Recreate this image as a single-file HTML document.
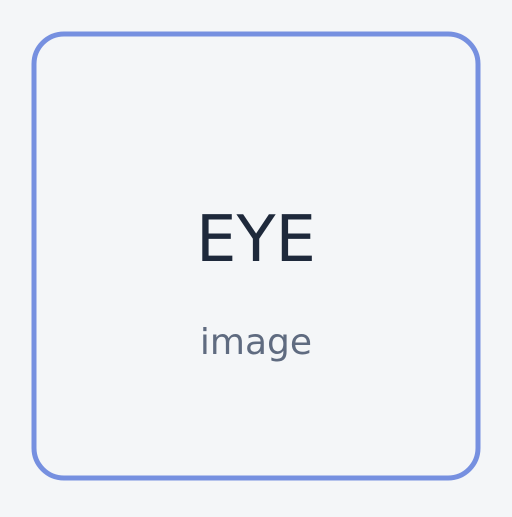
<!DOCTYPE html>
<html><head><style>html,body{margin:0;padding:0;background:#f4f6f8;}</style></head>
<body>
<svg width="512" height="512" xmlns="http://www.w3.org/2000/svg">
<rect width="512" height="512" fill="#f4f6f8"/>
<rect x="34" y="34" width="444" height="444" rx="30" ry="30" fill="#f4f6f8" stroke="#7690e0" stroke-width="5"/>
<text x="256" y="261" text-anchor="middle" font-family="DejaVu Sans, sans-serif" font-size="64" fill="#1e293b">EYE</text>
<text x="256" y="354" text-anchor="middle" font-family="DejaVu Sans, sans-serif" font-size="36" fill="#5f6b80">image</text>
</svg>
</body></html>
